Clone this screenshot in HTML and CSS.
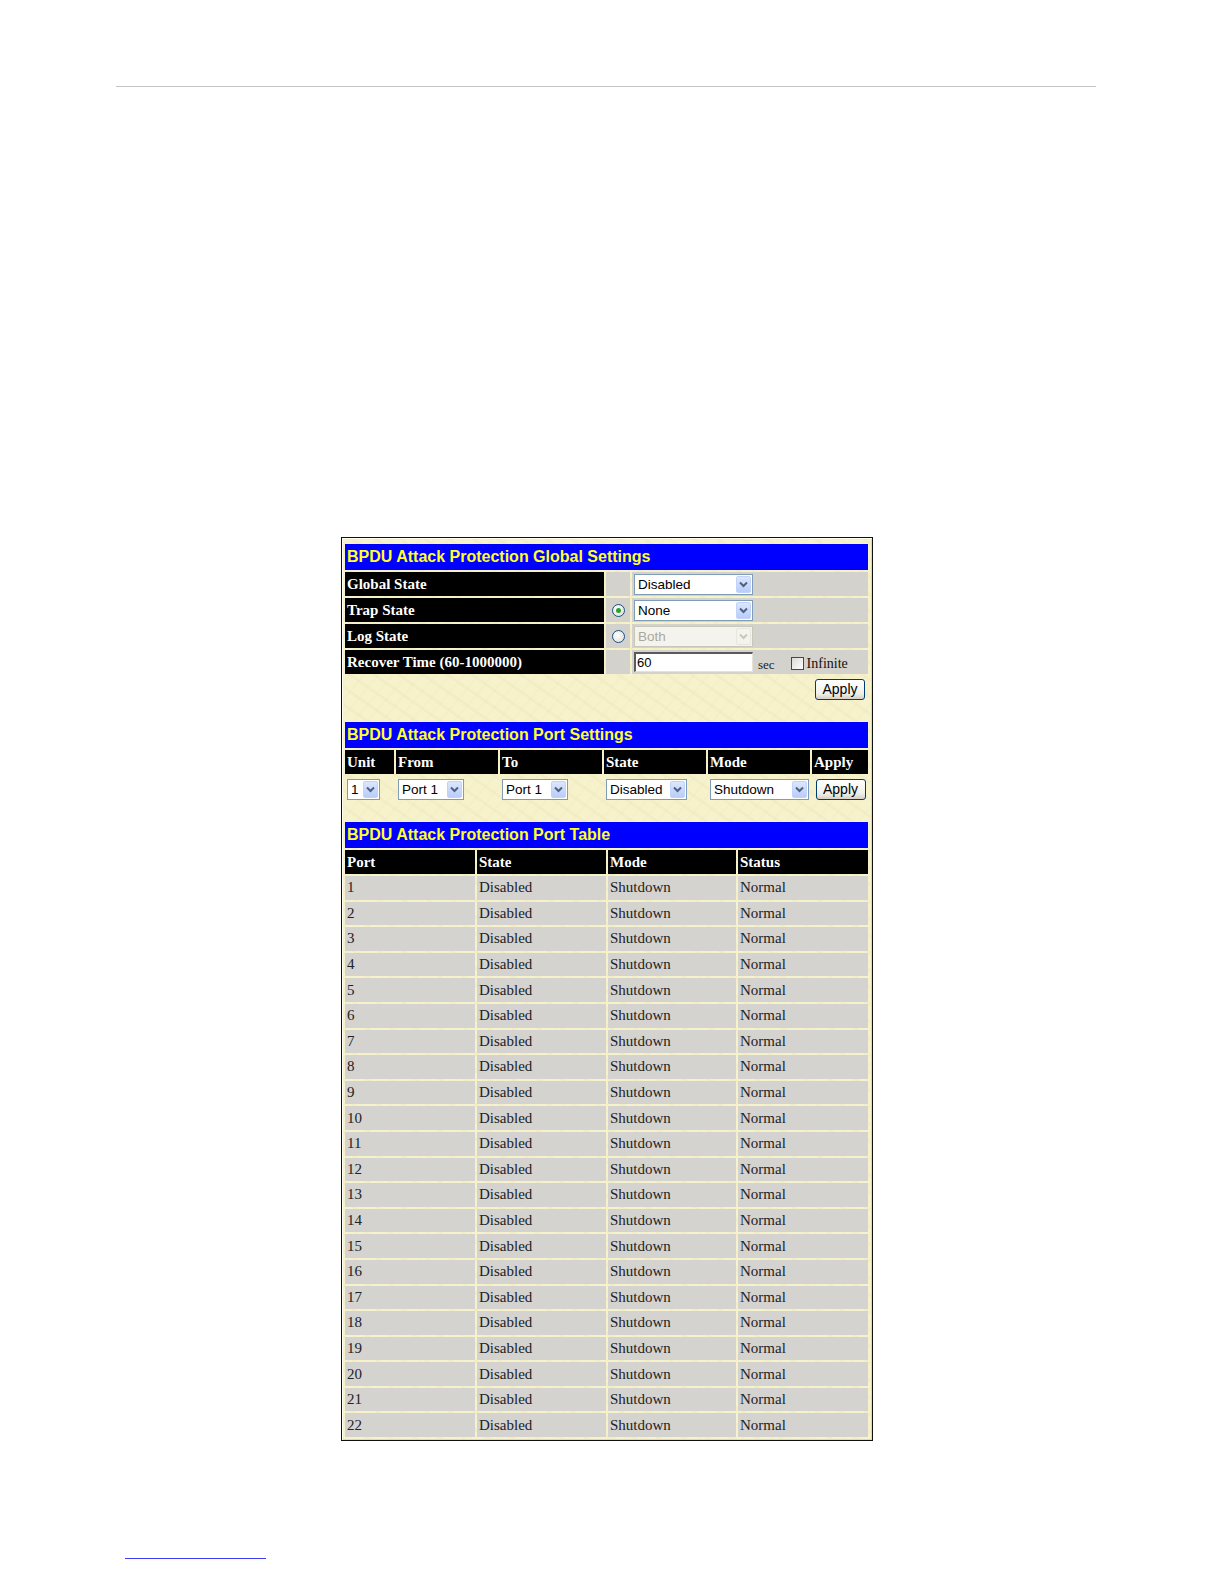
FILE: index.html
```html
<!DOCTYPE html>
<html>
<head>
<meta charset="utf-8">
<link rel="stylesheet" href="styles.css">
</head>
<body>
<div class="toprule"></div>
<div class="frame">
  <div class="hdr">BPDU Attack Protection Global Settings</div>
  <div class="ggrid">
    <div class="lab">Global State</div><div class="cell"></div>
    <div class="cell"><div class="sel w119"><span class="val">Disabled</span><span class="arr"><svg width="9" height="7" viewBox="0 0 9 7"><path d="M1 1.5 L4.5 5 L8 1.5" fill="none" stroke="#4d6185" stroke-width="2"/></svg></span></div></div>
    <div class="lab">Trap State</div><div class="cell cc"><span class="radio on"></span></div>
    <div class="cell"><div class="sel w119"><span class="val">None</span><span class="arr"><svg width="9" height="7" viewBox="0 0 9 7"><path d="M1 1.5 L4.5 5 L8 1.5" fill="none" stroke="#4d6185" stroke-width="2"/></svg></span></div></div>
    <div class="lab">Log State</div><div class="cell cc"><span class="radio"></span></div>
    <div class="cell"><div class="sel w119 dis"><span class="val">Both</span><span class="arr"><svg width="9" height="7" viewBox="0 0 9 7"><path d="M1 1.5 L4.5 5 L8 1.5" fill="none" stroke="#c9c7ba" stroke-width="2"/></svg></span></div></div>
    <div class="lab">Recover Time (60-1000000)</div><div class="cell"></div>
    <div class="cell rec"><div class="inp">60</div><span class="sec">sec</span><span class="chk"></span><span class="inf">Infinite</span></div>
  </div>
  <div class="applyrow"><span class="btn">Apply</span></div>

  <div class="hdr mt">BPDU Attack Protection Port Settings</div>
  <div class="pgrid">
    <div class="lab">Unit</div><div class="lab">From</div><div class="lab">To</div><div class="lab">State</div><div class="lab">Mode</div><div class="lab">Apply</div>
    <div class="pc"><div class="sel w33"><span class="val">1</span><span class="arr"><svg width="9" height="7" viewBox="0 0 9 7"><path d="M1 1.5 L4.5 5 L8 1.5" fill="none" stroke="#4d6185" stroke-width="2"/></svg></span></div></div>
    <div class="pc"><div class="sel w66"><span class="val">Port 1</span><span class="arr"><svg width="9" height="7" viewBox="0 0 9 7"><path d="M1 1.5 L4.5 5 L8 1.5" fill="none" stroke="#4d6185" stroke-width="2"/></svg></span></div></div>
    <div class="pc"><div class="sel w66"><span class="val">Port 1</span><span class="arr"><svg width="9" height="7" viewBox="0 0 9 7"><path d="M1 1.5 L4.5 5 L8 1.5" fill="none" stroke="#4d6185" stroke-width="2"/></svg></span></div></div>
    <div class="pc"><div class="sel w81"><span class="val">Disabled</span><span class="arr"><svg width="9" height="7" viewBox="0 0 9 7"><path d="M1 1.5 L4.5 5 L8 1.5" fill="none" stroke="#4d6185" stroke-width="2"/></svg></span></div></div>
    <div class="pc"><div class="sel w99"><span class="val">Shutdown</span><span class="arr"><svg width="9" height="7" viewBox="0 0 9 7"><path d="M1 1.5 L4.5 5 L8 1.5" fill="none" stroke="#4d6185" stroke-width="2"/></svg></span></div></div>
    <div class="pc"><span class="btn">Apply</span></div>
  </div>

  <div class="hdr mt">BPDU Attack Protection Port Table</div>
  <div class="tgrid" id="tgrid">
    <div class="lab">Port</div><div class="lab">State</div><div class="lab">Mode</div><div class="lab">Status</div>
  </div>
</div>
<div class="botrule"></div>
<script>
  var g = document.getElementById('tgrid');
  var h = '';
  for (var i = 1; i <= 22; i++) {
    h += '<div class="dc">' + i + '</div><div class="dc">Disabled</div><div class="dc">Shutdown</div><div class="dc">Normal</div>';
  }
  g.insertAdjacentHTML('beforeend', h);
</script>
</body>
</html>
```
FILE: styles.css
```css
html { overflow: hidden; }
html, body { margin: 0; padding: 0; background: #fff; }
body { height: 1584px; overflow: hidden; }

.toprule {
  margin: 86px 0 0 116px;
  width: 980px;
  height: 1px;
  background: #c4c4c4;
}

.frame {
  margin: 450px 0 0 341px;
  width: 532px;
  box-sizing: border-box;
  border: 1px solid #111;
  box-shadow: inset 1px 1px 0 #fffef0, inset -1px -1px 0 #ddd9b0;
  padding: 6px 4px 3px 3px;
  background-color: #f6f2cc;
  background-image:
    repeating-linear-gradient(35deg, rgba(232,225,176,0.25) 0 3px, rgba(0,0,0,0) 3px 14px),
    repeating-linear-gradient(-50deg, rgba(238,232,185,0.25) 0 2px, rgba(0,0,0,0) 2px 11px);
}

.hdr {
  height: 26px;
  background: #0000ff;
  color: #ffff2a;
  font: bold 16px "Liberation Sans", Arial, sans-serif;
  line-height: 26px;
  padding-left: 2px;
  margin-bottom: 2px;
}
.hdr.mt { margin-top: 20px; }

.lab {
  background: #000;
  color: #fff;
  font: bold 15px "Liberation Serif", "Times New Roman", serif;
  padding-left: 2px;
  display: flex;
  align-items: center;
  white-space: nowrap;
}

.cell {
  background: #d4d2cc;
  display: flex;
  align-items: center;
  padding-left: 2px;
}
.cell.cc { justify-content: center; padding-left: 0; }

.ggrid {
  display: grid;
  grid-template-columns: 259px 24px 236px;
  grid-auto-rows: 24px;
  gap: 2px;
  width: 523px;
}

.sel {
  display: inline-flex;
  align-items: center;
  height: 21px;
  box-sizing: border-box;
  border: 1px solid #7f9db9;
  background: #fff;
  font: 13.5px "Liberation Sans", Arial, sans-serif;
  color: #000;
}
.sel .val { flex: 1; padding-left: 3px; white-space: nowrap; }
.sel .arr {
  width: 15px;
  height: 17px;
  margin-right: 1px;
  box-sizing: border-box;
  border: 1px solid #c1d3fb;
  border-radius: 2px;
  background: linear-gradient(#dce6fd, #b9cdf9);
  display: flex;
  align-items: center;
  justify-content: center;
}
.sel.dis { border-color: #c9c7ba; background: #f4f3ee; color: #aca899; }
.sel.dis .arr { background: #f4f3ee; border-color: #e8e6dc; }
.w119 { width: 119px; }
.w33 { width: 33px; }
.w66 { width: 66px; }
.w81 { width: 81px; }
.w99 { width: 99px; }

.radio {
  width: 11px;
  height: 11px;
  border: 1px solid #1c5180;
  border-radius: 50%;
  background: radial-gradient(circle at 40% 40%, #ffffff, #dcdad5);
  display: inline-block;
  position: relative;
}
.radio.on::after {
  content: "";
  position: absolute;
  left: 3px; top: 3px;
  width: 5px; height: 5px;
  border-radius: 50%;
  background: #28a428;
}

.rec { font: 13px "Liberation Serif", "Times New Roman", serif; }
.inp {
  width: 119px;
  height: 20px;
  box-sizing: border-box;
  background: #fff;
  border-top: 2px solid #5a5a5a;
  border-left: 2px solid #5a5a5a;
  border-right: 1px solid #e4e2da;
  border-bottom: 1px solid #e4e2da;
  font: 13px "Liberation Sans", Arial, sans-serif;
  line-height: 17px;
  padding-left: 1px;
  margin-top: -1px;
}
.sec { margin-left: 5px; margin-top: 5px; color: #222; }
.chk {
  width: 11px; height: 11px;
  border: 1px solid #1c5180;
  background: linear-gradient(135deg, #dcdad5, #ffffff);
  margin-left: 16px;
  margin-top: 3px;
}
.inf { margin-left: 3px; font-size: 14px; margin-top: 3px; color: #111; }

.applyrow {
  height: 26px;
  margin-top: 2px;
  display: flex;
  align-items: center;
  justify-content: flex-end;
  padding-right: 3px;
}

.btn {
  display: inline-flex;
  align-items: center;
  justify-content: center;
  width: 50px;
  height: 21px;
  box-sizing: border-box;
  border: 1px solid #003c74;
  border-radius: 3px;
  background: linear-gradient(#ffffff, #f0f0ea 70%, #d6d0c5);
  font: 14px "Liberation Sans", Arial, sans-serif;
  color: #000;
}

.pgrid {
  display: grid;
  grid-template-columns: 49px 102px 102px 102px 102px 56px;
  grid-template-rows: 24px 26px;
  gap: 2px;
  width: 523px;
}
.pc { display: flex; align-items: center; padding-left: 2px; }
.pc:last-child { justify-content: center; padding-left: 1px; }

.tgrid {
  display: grid;
  grid-template-columns: 130px 129px 128px 130px;
  grid-template-rows: 24px;
  grid-auto-rows: 23.6px;
  gap: 2px;
  width: 523px;
}
.dc {
  background: #d4d3d0;
  font: 15px "Liberation Serif", "Times New Roman", serif;
  color: #222;
  display: flex;
  align-items: center;
  padding-left: 2px;
}

.botrule {
  margin: 117px 0 0 125px;
  width: 141px;
  height: 1px;
  background: #3b3bf0;
}
```
